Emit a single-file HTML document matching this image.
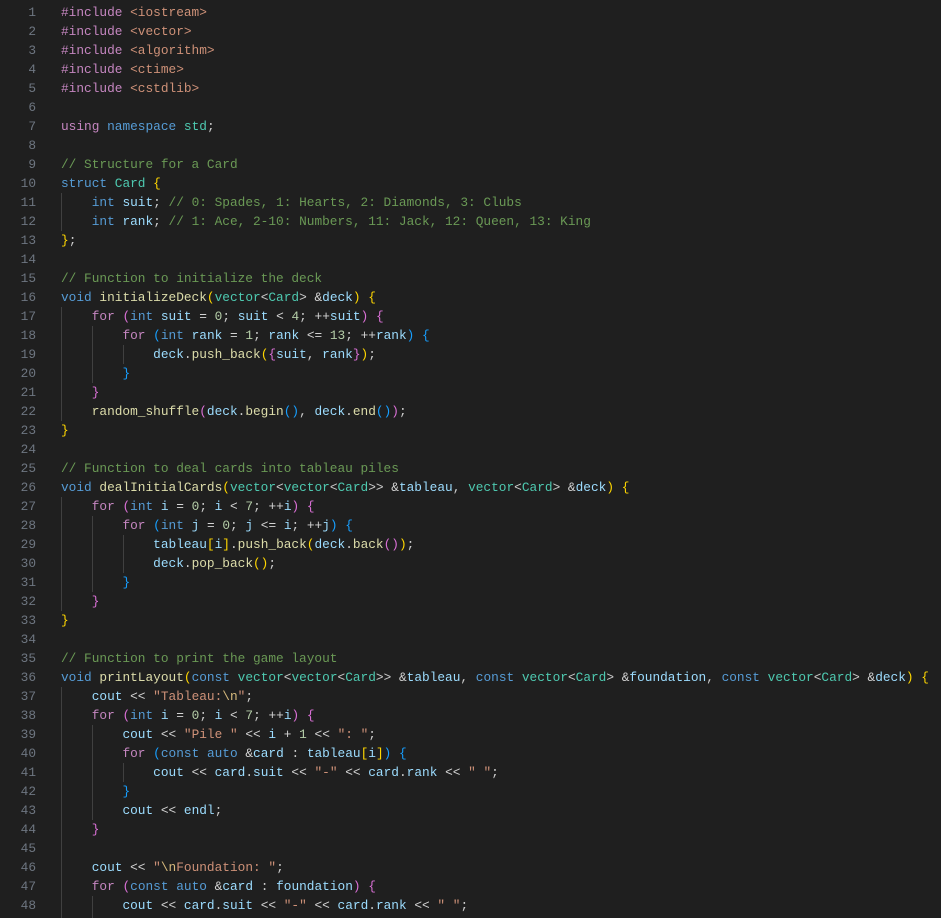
<!DOCTYPE html>
<html><head><meta charset="utf-8">
<style>
html,body{margin:0;padding:0;background:#1f1f1f;width:941px;height:918px;overflow:hidden}
#ed{position:relative;width:941px;height:918px;font-family:"Liberation Mono",monospace;font-size:12.8px;color:#cccccc}
.ln{position:absolute;left:0;width:36px;text-align:right;color:#6e7681;height:19px;line-height:19px}
.cd{position:absolute;left:61px;white-space:pre;height:19px;line-height:19px}
.g{position:absolute;width:1px;background:#404040}
.k{color:#569cd6}.c{color:#c586c0}.t{color:#4ec9b0}.v{color:#9cdcfe}.f{color:#dcdcaa}
.s{color:#ce9178}.e{color:#d7ba7d}.n{color:#b5cea8}.m{color:#6a9955}.o{color:#d4d4d4}
.b1{color:#ffd700}.b2{color:#da70d6}.b3{color:#179fff}
</style></head><body><div id="ed">
<div class="g" style="left:61px;top:193px;height:38px"></div>
<div class="g" style="left:61px;top:307px;height:114px"></div>
<div class="g" style="left:92px;top:326px;height:57px"></div>
<div class="g" style="left:123px;top:345px;height:19px"></div>
<div class="g" style="left:61px;top:497px;height:114px"></div>
<div class="g" style="left:92px;top:516px;height:76px"></div>
<div class="g" style="left:123px;top:535px;height:38px"></div>
<div class="g" style="left:61px;top:687px;height:231px"></div>
<div class="g" style="left:92px;top:725px;height:95px"></div>
<div class="g" style="left:123px;top:763px;height:19px"></div>
<div class="g" style="left:92px;top:896px;height:22px"></div>

<div class="ln" style="top:3px">1</div><div class="cd" style="top:3px"><span class="c">#include</span> <span class="s">&lt;iostream&gt;</span></div>
<div class="ln" style="top:22px">2</div><div class="cd" style="top:22px"><span class="c">#include</span> <span class="s">&lt;vector&gt;</span></div>
<div class="ln" style="top:41px">3</div><div class="cd" style="top:41px"><span class="c">#include</span> <span class="s">&lt;algorithm&gt;</span></div>
<div class="ln" style="top:60px">4</div><div class="cd" style="top:60px"><span class="c">#include</span> <span class="s">&lt;ctime&gt;</span></div>
<div class="ln" style="top:79px">5</div><div class="cd" style="top:79px"><span class="c">#include</span> <span class="s">&lt;cstdlib&gt;</span></div>
<div class="ln" style="top:98px">6</div>
<div class="ln" style="top:117px">7</div><div class="cd" style="top:117px"><span class="c">using</span> <span class="k">namespace</span> <span class="t">std</span>;</div>
<div class="ln" style="top:136px">8</div>
<div class="ln" style="top:155px">9</div><div class="cd" style="top:155px"><span class="m">// Structure for a Card</span></div>
<div class="ln" style="top:174px">10</div><div class="cd" style="top:174px"><span class="k">struct</span> <span class="t">Card</span> <span class="b1">{</span></div>
<div class="ln" style="top:193px">11</div><div class="cd" style="top:193px">    <span class="k">int</span> <span class="v">suit</span>; <span class="m">// 0: Spades, 1: Hearts, 2: Diamonds, 3: Clubs</span></div>
<div class="ln" style="top:212px">12</div><div class="cd" style="top:212px">    <span class="k">int</span> <span class="v">rank</span>; <span class="m">// 1: Ace, 2-10: Numbers, 11: Jack, 12: Queen, 13: King</span></div>
<div class="ln" style="top:231px">13</div><div class="cd" style="top:231px"><span class="b1">}</span>;</div>
<div class="ln" style="top:250px">14</div>
<div class="ln" style="top:269px">15</div><div class="cd" style="top:269px"><span class="m">// Function to initialize the deck</span></div>
<div class="ln" style="top:288px">16</div><div class="cd" style="top:288px"><span class="k">void</span> <span class="f">initializeDeck</span><span class="b1">(</span><span class="t">vector</span>&lt;<span class="t">Card</span>&gt; <span class="o">&amp;</span><span class="v">deck</span><span class="b1">)</span> <span class="b1">{</span></div>
<div class="ln" style="top:307px">17</div><div class="cd" style="top:307px">    <span class="c">for</span> <span class="b2">(</span><span class="k">int</span> <span class="v">suit</span> <span class="o">=</span> <span class="n">0</span>; <span class="v">suit</span> <span class="o">&lt;</span> <span class="n">4</span>; <span class="o">++</span><span class="v">suit</span><span class="b2">)</span> <span class="b2">{</span></div>
<div class="ln" style="top:326px">18</div><div class="cd" style="top:326px">        <span class="c">for</span> <span class="b3">(</span><span class="k">int</span> <span class="v">rank</span> <span class="o">=</span> <span class="n">1</span>; <span class="v">rank</span> <span class="o">&lt;=</span> <span class="n">13</span>; <span class="o">++</span><span class="v">rank</span><span class="b3">)</span> <span class="b3">{</span></div>
<div class="ln" style="top:345px">19</div><div class="cd" style="top:345px">            <span class="v">deck</span>.<span class="f">push_back</span><span class="b1">(</span><span class="b2">{</span><span class="v">suit</span>, <span class="v">rank</span><span class="b2">}</span><span class="b1">)</span>;</div>
<div class="ln" style="top:364px">20</div><div class="cd" style="top:364px">        <span class="b3">}</span></div>
<div class="ln" style="top:383px">21</div><div class="cd" style="top:383px">    <span class="b2">}</span></div>
<div class="ln" style="top:402px">22</div><div class="cd" style="top:402px">    <span class="f">random_shuffle</span><span class="b2">(</span><span class="v">deck</span>.<span class="f">begin</span><span class="b3">()</span>, <span class="v">deck</span>.<span class="f">end</span><span class="b3">()</span><span class="b2">)</span>;</div>
<div class="ln" style="top:421px">23</div><div class="cd" style="top:421px"><span class="b1">}</span></div>
<div class="ln" style="top:440px">24</div>
<div class="ln" style="top:459px">25</div><div class="cd" style="top:459px"><span class="m">// Function to deal cards into tableau piles</span></div>
<div class="ln" style="top:478px">26</div><div class="cd" style="top:478px"><span class="k">void</span> <span class="f">dealInitialCards</span><span class="b1">(</span><span class="t">vector</span>&lt;<span class="t">vector</span>&lt;<span class="t">Card</span>&gt;&gt; <span class="o">&amp;</span><span class="v">tableau</span>, <span class="t">vector</span>&lt;<span class="t">Card</span>&gt; <span class="o">&amp;</span><span class="v">deck</span><span class="b1">)</span> <span class="b1">{</span></div>
<div class="ln" style="top:497px">27</div><div class="cd" style="top:497px">    <span class="c">for</span> <span class="b2">(</span><span class="k">int</span> <span class="v">i</span> <span class="o">=</span> <span class="n">0</span>; <span class="v">i</span> <span class="o">&lt;</span> <span class="n">7</span>; <span class="o">++</span><span class="v">i</span><span class="b2">)</span> <span class="b2">{</span></div>
<div class="ln" style="top:516px">28</div><div class="cd" style="top:516px">        <span class="c">for</span> <span class="b3">(</span><span class="k">int</span> <span class="v">j</span> <span class="o">=</span> <span class="n">0</span>; <span class="v">j</span> <span class="o">&lt;=</span> <span class="v">i</span>; <span class="o">++</span><span class="v">j</span><span class="b3">)</span> <span class="b3">{</span></div>
<div class="ln" style="top:535px">29</div><div class="cd" style="top:535px">            <span class="v">tableau</span><span class="b1">[</span><span class="v">i</span><span class="b1">]</span>.<span class="f">push_back</span><span class="b1">(</span><span class="v">deck</span>.<span class="f">back</span><span class="b2">()</span><span class="b1">)</span>;</div>
<div class="ln" style="top:554px">30</div><div class="cd" style="top:554px">            <span class="v">deck</span>.<span class="f">pop_back</span><span class="b1">()</span>;</div>
<div class="ln" style="top:573px">31</div><div class="cd" style="top:573px">        <span class="b3">}</span></div>
<div class="ln" style="top:592px">32</div><div class="cd" style="top:592px">    <span class="b2">}</span></div>
<div class="ln" style="top:611px">33</div><div class="cd" style="top:611px"><span class="b1">}</span></div>
<div class="ln" style="top:630px">34</div>
<div class="ln" style="top:649px">35</div><div class="cd" style="top:649px"><span class="m">// Function to print the game layout</span></div>
<div class="ln" style="top:668px">36</div><div class="cd" style="top:668px"><span class="k">void</span> <span class="f">printLayout</span><span class="b1">(</span><span class="k">const</span> <span class="t">vector</span>&lt;<span class="t">vector</span>&lt;<span class="t">Card</span>&gt;&gt; <span class="o">&amp;</span><span class="v">tableau</span>, <span class="k">const</span> <span class="t">vector</span>&lt;<span class="t">Card</span>&gt; <span class="o">&amp;</span><span class="v">foundation</span>, <span class="k">const</span> <span class="t">vector</span>&lt;<span class="t">Card</span>&gt; <span class="o">&amp;</span><span class="v">deck</span><span class="b1">)</span> <span class="b1">{</span></div>
<div class="ln" style="top:687px">37</div><div class="cd" style="top:687px">    <span class="v">cout</span> <span class="o">&lt;&lt;</span> <span class="s">"Tableau:</span><span class="e">\n</span><span class="s">"</span>;</div>
<div class="ln" style="top:706px">38</div><div class="cd" style="top:706px">    <span class="c">for</span> <span class="b2">(</span><span class="k">int</span> <span class="v">i</span> <span class="o">=</span> <span class="n">0</span>; <span class="v">i</span> <span class="o">&lt;</span> <span class="n">7</span>; <span class="o">++</span><span class="v">i</span><span class="b2">)</span> <span class="b2">{</span></div>
<div class="ln" style="top:725px">39</div><div class="cd" style="top:725px">        <span class="v">cout</span> <span class="o">&lt;&lt;</span> <span class="s">"Pile "</span> <span class="o">&lt;&lt;</span> <span class="v">i</span> <span class="o">+</span> <span class="n">1</span> <span class="o">&lt;&lt;</span> <span class="s">": "</span>;</div>
<div class="ln" style="top:744px">40</div><div class="cd" style="top:744px">        <span class="c">for</span> <span class="b3">(</span><span class="k">const</span> <span class="k">auto</span> <span class="o">&amp;</span><span class="v">card</span> : <span class="v">tableau</span><span class="b1">[</span><span class="v">i</span><span class="b1">]</span><span class="b3">)</span> <span class="b3">{</span></div>
<div class="ln" style="top:763px">41</div><div class="cd" style="top:763px">            <span class="v">cout</span> <span class="o">&lt;&lt;</span> <span class="v">card</span>.<span class="v">suit</span> <span class="o">&lt;&lt;</span> <span class="s">"-"</span> <span class="o">&lt;&lt;</span> <span class="v">card</span>.<span class="v">rank</span> <span class="o">&lt;&lt;</span> <span class="s">" "</span>;</div>
<div class="ln" style="top:782px">42</div><div class="cd" style="top:782px">        <span class="b3">}</span></div>
<div class="ln" style="top:801px">43</div><div class="cd" style="top:801px">        <span class="v">cout</span> <span class="o">&lt;&lt;</span> <span class="v">endl</span>;</div>
<div class="ln" style="top:820px">44</div><div class="cd" style="top:820px">    <span class="b2">}</span></div>
<div class="ln" style="top:839px">45</div>
<div class="ln" style="top:858px">46</div><div class="cd" style="top:858px">    <span class="v">cout</span> <span class="o">&lt;&lt;</span> <span class="s">"</span><span class="e">\n</span><span class="s">Foundation: "</span>;</div>
<div class="ln" style="top:877px">47</div><div class="cd" style="top:877px">    <span class="c">for</span> <span class="b2">(</span><span class="k">const</span> <span class="k">auto</span> <span class="o">&amp;</span><span class="v">card</span> : <span class="v">foundation</span><span class="b2">)</span> <span class="b2">{</span></div>
<div class="ln" style="top:896px">48</div><div class="cd" style="top:896px">        <span class="v">cout</span> <span class="o">&lt;&lt;</span> <span class="v">card</span>.<span class="v">suit</span> <span class="o">&lt;&lt;</span> <span class="s">"-"</span> <span class="o">&lt;&lt;</span> <span class="v">card</span>.<span class="v">rank</span> <span class="o">&lt;&lt;</span> <span class="s">" "</span>;</div>
</div></body></html>
